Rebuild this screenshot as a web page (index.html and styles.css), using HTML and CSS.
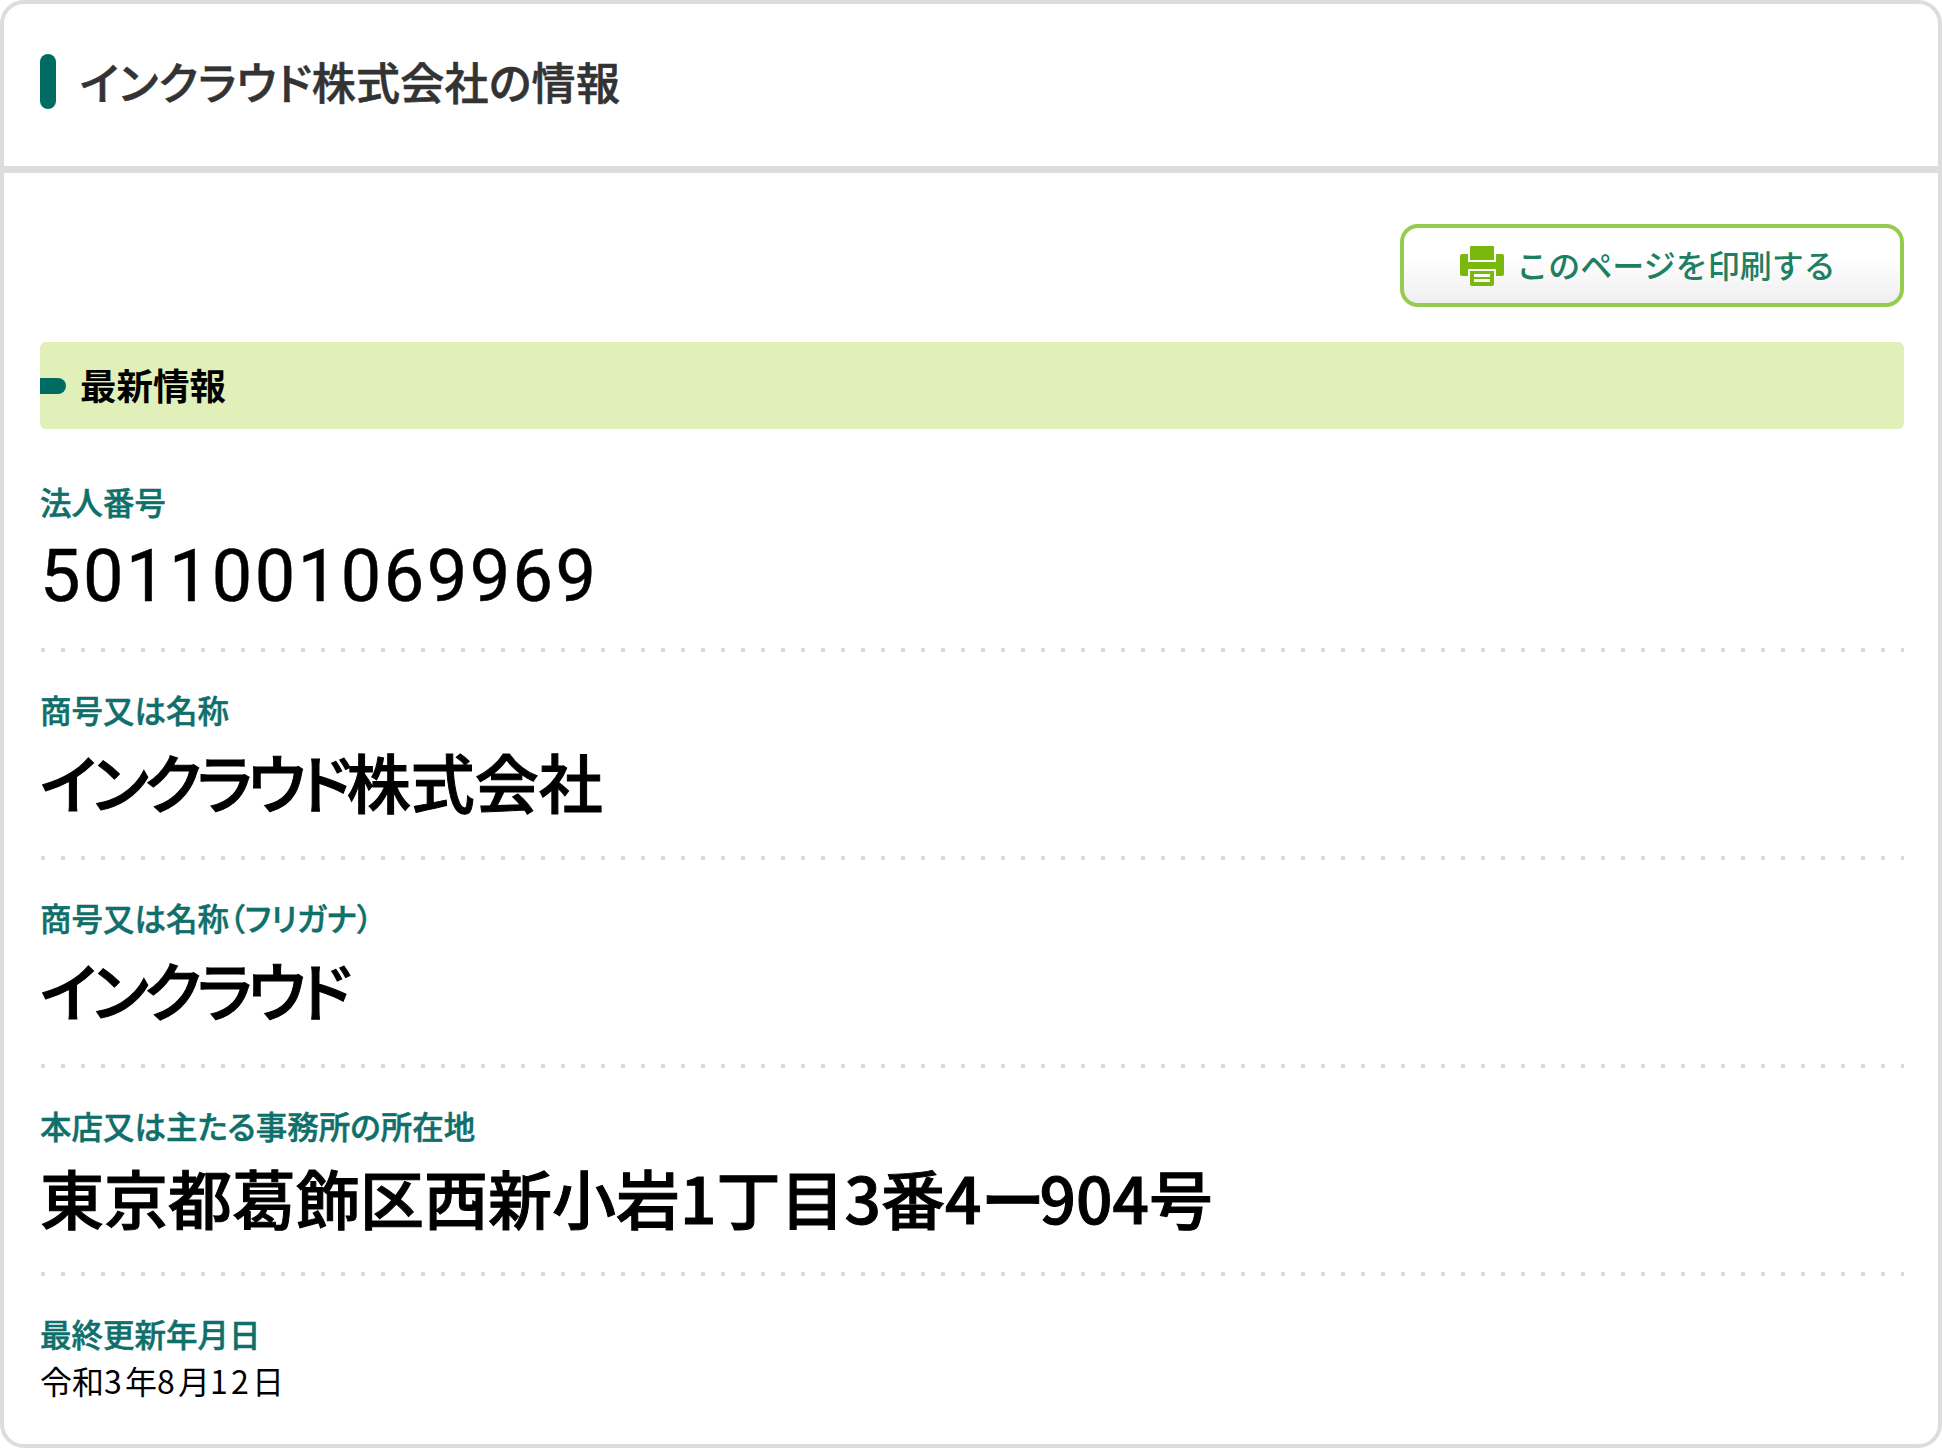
FILE: index.html
```html
<!doctype html>
<html lang="ja">

<head>
  <meta charset="UTF-8" />
  <meta name="viewport" content="width=device-width, initial-scale=1.0" />
  <title>インクラウド株式会社の情報</title>
  <link rel="stylesheet" href="styles.css">
</head>

<body>
  <div class="card">
    <header class="card-head">
      <h1 class="page-title">インクラウド株式会社の情報</h1>
    </header>

    <div class="card-body">
      <div class="print-row">
        <a class="print-btn" href="#">
          <svg class="print-icon" viewBox="0 0 44 40" aria-hidden="true">
            <path fill="#7ab80e" d="M11 0h22a1 1 0 0 1 1 1v13H10V1a1 1 0 0 1 1-1z" />
            <path fill="#7ab80e" d="M2 8h6v8h28V8h6a2 2 0 0 1 2 2v18a2 2 0 0 1-2 2h-6v-7H8v7H2a2 2 0 0 1-2-2V10a2 2 0 0 1 2-2z" />
            <path fill="#7ab80e" fill-rule="evenodd" d="M10 25h24v13a2 2 0 0 1-2 2H12a2 2 0 0 1-2-2zm4 3v3h16v-3zm0 5v3h16v-3z" />
          </svg>
          <span>このページを印刷する</span>
        </a>
      </div>

      <h2 class="section-title">最新情報</h2>

      <dl class="info-list">
        <div class="info-row">
          <dt>法人番号</dt>
          <dd class="corp-number">5011001069969</dd>
        </div>
        <div class="info-row">
          <dt>商号又は名称</dt>
          <dd class="big"><span class="kana">インクラウド</span>株式会社</dd>
        </div>
        <div class="info-row">
          <dt>商号又は名称（フリガナ）</dt>
          <dd class="big"><span class="kana">インクラウド</span></dd>
        </div>
        <div class="info-row">
          <dt>本店又は主たる事務所の所在地</dt>
          <dd class="big">東京都葛飾区西新小岩<span class="num">1</span>丁目<span class="num">3</span>番<span class="num">4</span><span class="dash">ー</span><span class="num">904</span>号</dd>
        </div>
        <div class="info-row last">
          <dt>最終更新年月日</dt>
          <dd class="small">令和<span class="num">3</span>年<span class="num">8</span>月<span class="num">12</span>日</dd>
        </div>
      </dl>
    </div>
  </div>
</body>

</html>
```

FILE: styles.css
```css
* {
  margin: 0;
  padding: 0;
  box-sizing: border-box;
}

body {
  background: #fff;
  font-family: "Noto Sans CJK JP", "Noto Sans", sans-serif;
  color: #000;
}

.card {
  width: 1942px;
  height: 1448px;
  border: 4px solid #ddd;
  border-radius: 24px;
  overflow: hidden;
  background: #fff;
}

/* Header */
.card-head {
  height: 169px;
  padding: 50px 36px 0;
  border-bottom: 7px solid #ddd;
}

.page-title {
  display: flex;
  align-items: center;
  gap: 24px;
  height: 55px;
  padding-bottom: 2px;
  font-size: 44px;
  line-height: 50px;
  font-weight: 500;
  color: #333;
  letter-spacing: 0.3px;
  font-feature-settings: "palt";
  -webkit-text-stroke: 0.6px #333;
}

.page-title::before {
  content: "";
  flex: none;
  align-self: flex-start;
  width: 16px;
  height: 55px;
  background: #006b63;
  border-radius: 8px;
}

.card-body {
  padding: 0 34px 0 36px;
}

/* Print button */
.print-row {
  display: flex;
  justify-content: flex-end;
  padding-top: 51px;
}

.print-btn {
  display: flex;
  align-items: center;
  justify-content: center;
  gap: 12px;
  width: 504px;
  height: 83px;
  padding-right: 8px;
  border: 4px solid #95cc4f;
  border-radius: 18px;
  background: linear-gradient(#fff, #fff 40%, #efefef);
  color: #1f7f62;
  font-size: 32px;
  font-weight: 500;
  line-height: 40px;
  text-decoration: none;
}

.print-btn span {
  margin-bottom: 4px;
}

.print-icon {
  width: 44px;
  height: 40px;
}

/* Section band */
.section-title {
  display: flex;
  align-items: center;
  gap: 14px;
  height: 87px;
  margin-top: 35px;
  padding-bottom: 2px;
  background: #e0f0b8;
  border-radius: 6px;
  font-size: 36.5px;
  font-weight: 700;
  line-height: 46px;
}

.section-title::before {
  content: "";
  flex: none;
  width: 26px;
  height: 16px;
  margin-top: 2px;
  background: #006b63;
  border-radius: 0 8px 8px 0;
}

/* Rows */
.info-list {
  padding-top: 16px;
}

.info-row {
  height: 208px;
  padding-top: 32px;
  background: radial-gradient(circle, #d8d8d8 2px, transparent 2.5px) -7px 100% / 20px 6px repeat-x;
}

.info-row.last {
  background: none;
}

.info-row dt {
  height: 48px;
  line-height: 48px;
  font-size: 31.5px;
  font-weight: 500;
  color: #0f6f6a;
  font-feature-settings: "palt";
  -webkit-text-stroke: 0.5px #0f6f6a;
}

.info-row dd {
  line-height: 94px;
  white-space: nowrap;
}

.corp-number {
  margin-top: 5px;
  font-size: 72px;
  letter-spacing: 2.5px;
  font-family: "Roboto", sans-serif;
  -webkit-text-stroke: 0.5px #000;
}

.big {
  font-size: 64px;
  font-weight: 500;
  font-feature-settings: "palt";
  -webkit-text-stroke: 1px #000;
}

.big .kana {
  letter-spacing: -4.6px;
}

.big .dash {
  letter-spacing: -5px;
}

.info-row .small {
  font-size: 32px;
  line-height: 44px;
  margin-top: 1px;
}

.small .num {
  letter-spacing: 3.2px;
}
```
